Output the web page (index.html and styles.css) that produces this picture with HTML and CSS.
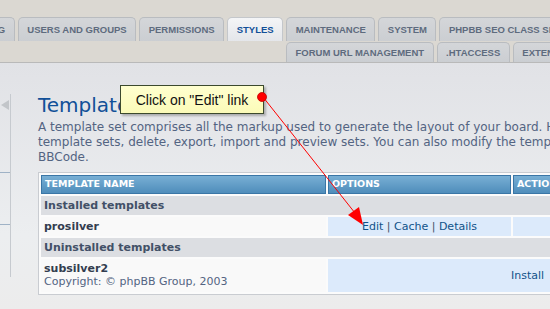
FILE: index.html
```html
<!DOCTYPE html>
<html lang="en">
<head>
    <meta charset="UTF-8">
    <title>Templates - Styles</title>
    <link rel="stylesheet" href="styles.css">
</head>
<body>
    <div class="header">
        <ul class="tabs row-top">
            <li class="tab first">POSTING</li>
            <li class="tab">USERS AND GROUPS</li>
            <li class="tab">PERMISSIONS</li>
            <li class="tab active">STYLES</li>
            <li class="tab">MAINTENANCE</li>
            <li class="tab">SYSTEM</li>
            <li class="tab">PHPBB SEO CLASS SETTINGS</li>
        </ul>
        <ul class="tabs row-bottom">
            <li class="tab">FORUM URL MANAGEMENT</li>
            <li class="tab">.HTACCESS</li>
            <li class="tab">EXTENDED</li>
        </ul>
    </div>

    <div class="panel">
        <div class="menu">
            <span class="collapse"></span>
            <div class="menu-sep first-sep"></div>
            <div class="menu-sep"></div>
        </div>

        <div class="main">
            <h1>Templates</h1>
            <p class="intro">A template set comprises all the markup used to generate the layout of your board. Here you can edit existing<br>
                template sets, delete, export, import and preview sets. You can also modify the template code used to generate<br>
                BBCode.</p>

            <table class="list">
                <thead>
                    <tr>
                        <th class="col-name">Template name</th>
                        <th class="col-opts">Options</th>
                        <th class="col-act">Actions</th>
                    </tr>
                </thead>
                <tbody>
                    <tr>
                        <td class="cat" colspan="3">Installed templates</td>
                    </tr>
                    <tr>
                        <td class="name"><strong>prosilver</strong></td>
                        <td class="opts"><a href="#">Edit</a> | <a href="#">Cache</a> | <a href="#">Details</a></td>
                        <td class="act"></td>
                    </tr>
                    <tr>
                        <td class="cat" colspan="3">Uninstalled templates</td>
                    </tr>
                    <tr>
                        <td class="name two-line"><strong>subsilver2</strong><br><span class="copy">Copyright: &copy; phpBB Group, 2003</span></td>
                        <td class="opts wide" colspan="2"><a href="#">Install</a></td>
                    </tr>
                </tbody>
            </table>
        </div>
    </div>

    <!-- tutorial annotation drawn over the screen -->
    <div class="callout">Click on "Edit" link</div>
    <svg class="pointer" width="550" height="309" viewBox="0 0 550 309">
        <line x1="263" y1="97" x2="355" y2="213" stroke="#ff0000" stroke-width="1"/>
        <polygon points="363,225 348,215 359,207" fill="#ff0000"/>
        <circle cx="262" cy="97" r="4.5" fill="#ff0000" stroke="#c00000" stroke-width="0.8"/>
    </svg>
</body>
</html>
```

FILE: styles.css
```css
body {
    margin: 0;
    width: 550px;
    height: 309px;
    overflow: hidden;
    position: relative;
    font-family: "DejaVu Sans", Verdana, sans-serif;
    background: #dbd8d2;
}

.header {
    padding-top: 17px;
    height: 45px;
}

.tabs {
    list-style: none;
    margin: 0;
    padding: 0;
    display: flex;
    gap: 3px;
    white-space: nowrap;
}

.row-top {
    height: 24px;
}

.row-bottom {
    margin-top: 1px;
    height: 20px;
    padding-left: 286px;
}

.tab {
    box-sizing: border-box;
    height: 100%;
    padding: 0 8.5px;
    display: flex;
    align-items: center;
    font-family: "Liberation Sans", Arial, sans-serif;
    font-size: 9.5px;
    font-weight: bold;
    color: #5e6b7e;
    background: linear-gradient(#d4d6d9, #cbced2);
    border: 1px solid #b9bcc0;
    border-bottom: none;
    border-radius: 5px 5px 0 0;
    flex-shrink: 0;
}

.tab.first {
    margin-left: -47px;
}

.tab.active {
    color: #115098;
    background: linear-gradient(#f4f5f7, #e4e6ea);
    border-color: #c4c7cb;
}

.panel {
    border-top: 1px solid #b9b9b9;
    background: linear-gradient(#e1e2e6, #eceef0 70%, #ececec);
    height: 246px;
    display: flex;
}

.menu {
    width: 10px;
    margin-top: 31px;
    height: 183px;
    border-right: 1px solid #c6cacf;
    flex-shrink: 0;
}

.collapse {
    display: block;
    width: 0;
    height: 0;
    margin-top: 6px;
    margin-left: 1px;
    border-top: 5px solid transparent;
    border-bottom: 5px solid transparent;
    border-right: 8px solid #c2c5c9;
}

.menu-sep {
    height: 1px;
    background: #9fb2c6;
}

.first-sep {
    margin-top: 62px;
}

.menu-sep + .menu-sep {
    margin-top: 51px;
}

.main {
    padding-left: 27px;
    padding-top: 30px;
}

h1 {
    margin: 0;
    font-family: "DejaVu Sans", Verdana, sans-serif;
    font-weight: normal;
    font-size: 20px;
    line-height: 24px;
    color: #115098;
}

.intro {
    margin: 3px 0 0;
    font-size: 12px;
    line-height: 15px;
    color: #536482;
    white-space: nowrap;
}

.list {
    margin-top: 7px;
    width: 700px;
    border: 1px solid #c9ccd1;
    background: #fbfbfb;
    border-spacing: 2px;
    font-size: 11px;
    color: #425067;
}

.list th {
    padding: 2px 3px 3px;
    line-height: 12px;
    text-align: left;
    font-size: 9.5px;
    font-weight: bold;
    text-transform: uppercase;
    color: #fff;
    background: linear-gradient(#78afd4, #4f8dbb);
    border: 1px solid #3a76a6;
}

.col-name {
    width: 277px;
}

.col-opts {
    width: 175px;
}

.list td {
    padding: 3px;
    line-height: 13px;
}

.list td.two-line {
    padding-bottom: 4px;
}

.list td.cat {
    background: #dcdee2;
    font-weight: bold;
    color: #425067;
}

.list td.name {
    background: #f9f9f9;
    color: #333d4f;
}

.list td.opts,
.list td.act {
    background: #dceafb;
}

.list td.opts {
    text-align: center;
}

.list td.wide {
    padding-left: 183px;
    text-align: left;
}

.list a {
    color: #105289;
    text-decoration: none;
}

.copy {
    color: #536482;
    font-weight: normal;
}

.callout {
    position: absolute;
    left: 120px;
    top: 85px;
    box-sizing: border-box;
    width: 144px;
    height: 29px;
    border: 1px solid #3c4a2e;
    background: linear-gradient(#ffffcf, #fbfbb8);
    box-shadow: 2px 2px 2px rgba(0, 0, 0, 0.25);
    font-family: "Liberation Sans", Arial, sans-serif;
    font-size: 14px;
    color: #111;
    display: flex;
    align-items: center;
    justify-content: center;
}

.pointer {
    position: absolute;
    left: 0;
    top: 0;
    pointer-events: none;
}
```
